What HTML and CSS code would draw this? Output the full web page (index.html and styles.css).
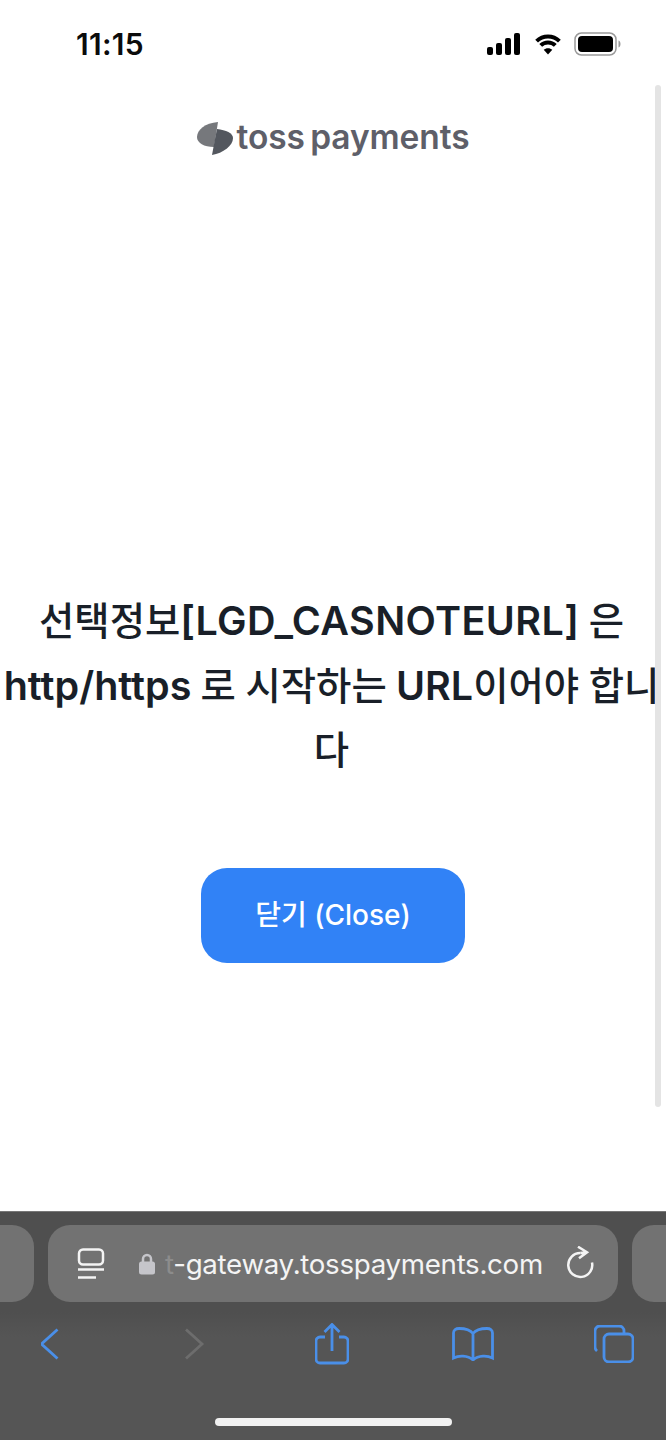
FILE: index.html
```html
<!DOCTYPE html>
<html lang="ko">
<head>
<meta charset="utf-8">
<title>toss payments</title>
<link rel="stylesheet" href="styles.css">
</head>
<body>
<div class="phone">
  <header class="status">
    <span class="time">11:15</span>
    <div class="status-icons">
      <svg width="35" height="22" viewBox="0 0 35 22"><rect x="0" y="14" width="6" height="8" rx="2"/><rect x="9" y="10" width="6" height="12" rx="2"/><rect x="18" y="5" width="6" height="17" rx="2"/><rect x="27" y="0" width="6" height="22" rx="2"/></svg>
      <svg width="30" height="22" viewBox="0 0 30 22"><path d="M15 3.5c4.4 0 8.400 1.700 11.400 4.600" class="wifi"/><path d="M3.600 8.100C6.600 5.200 10.600 3.500 15 3.500" class="wifi"/><path d="M7.700 12.400c1.900-1.900 4.500-3 7.300-3s5.400 1.100 7.300 3" class="wifi"/><path d="M15 21.500l-4.300-4.700c1.100-1 2.600-1.600 4.300-1.600s3.200.6 4.300 1.600z"/></svg>
      <svg width="47" height="24" viewBox="0 0 47 24"><rect x="1" y="1" width="41" height="22" rx="6.500" class="batt-frame"/><rect x="4" y="4" width="35" height="16" rx="4"/><path d="M44.500 8.500c1.300.4 2 1.800 2 3.500s-.7 3.100-2 3.500z" class="batt-cap"/></svg>
    </div>
  </header>

  <main class="page">
    <div class="logo">
      <svg class="logo-mark" width="36" height="33" viewBox="0 0 36 33"><path d="M21 0C8 1 0 8 0 15c0 6 7 10 17 10z" fill="#76787c"/><path d="M20 7c9 1 16 4 16 9 0 8-10 15-21 17l3-16z" fill="#53575e"/></svg>
      <span class="logo-text">toss payments</span>
    </div>
    <div class="message">
      <h1 class="title"><span class="ko">선택정보</span><span class="code">[LGD_CASNOTEURL]</span> <span class="ko">은</span> http/https <span class="ko">로 시작하는</span> URL<span class="ko">이어야 합니</span><span class="ko">다</span></h1>
      <button class="close" type="button">닫기 (Close)</button>
    </div>
  </main>
  <div class="scrollbar"></div>

  <footer class="safari">
    <div class="tabs">
      <div class="tab-side tab-left"></div>
      <div class="address">
        <svg class="reader" width="28" height="32" viewBox="0 0 28 32"><rect x="2" y="1.500" width="24" height="15" rx="4"/><path d="M1 21.500h26M1 29.500h18"/></svg>
        <svg class="lock" width="16" height="22" viewBox="0 0 16 22"><path d="M4 9V6a4 4 0 0 1 8 0v3" class="shackle"/><rect x="0" y="8.500" width="16" height="13" rx="2.500"/></svg>
        <span class="url"><span class="url-fade">t</span>-gateway.tosspayments.com</span>
        <svg class="reload" width="30" height="36" viewBox="0 0 30 36"><path d="M14.300 7A12 12 0 1 0 26 16.500"/><path d="M14.300 7L21 6.300M12 .7l9 5.600-8 6"/></svg>
      </div>
      <div class="tab-side tab-right"></div>
    </div>
    <nav class="tools">
      <svg class="tool" width="20" height="32" viewBox="1.500 0 20 32"><path d="M18 1.500L2 16l16 14.500"/></svg>
      <svg class="tool tool-off" width="26" height="32" viewBox="0 0 26 32"><path d="M7 1.500L23 16 7 30.500"/></svg>
      <svg class="tool" width="34" height="42" viewBox="0 0 34 42"><path d="M10 14H5a4 4 0 0 0-4 4v18a4 4 0 0 0 4 4h24a4 4 0 0 0 4-4V18a4 4 0 0 0-4-4h-5"/><path d="M17 28V2M9.500 9L17 1.500 24.500 9"/></svg>
      <svg class="tool" width="42" height="34" viewBox="0 0 42 34"><path d="M21 6.500C18 2.500 13 1.500 7 1.500c-3 0-5.500 1.500-5.500 4.500v25c5-2.500 14-3 19.500 2 5.500-5 14.500-4.500 19.500-2V6c0-3-2.500-4.500-5.500-4.500-6 0-11 1-14 5zM21 6.500V33"/></svg>
      <svg class="tool" width="40" height="38" viewBox="0 0 40 38"><path d="M3 26c-1-.8-2-2-2-4V6a5 5 0 0 1 5-5h19a5 5 0 0 1 5 5v3"/><rect x="10" y="9" width="29" height="28" rx="5"/></svg>
    </nav>
    <div class="home"></div>
  </footer>
</div>
</body>
</html>
```
FILE: styles.css
```css
* { box-sizing: border-box; }
html, body { margin: 0; padding: 0; }
body { background: #fff; font-family: "Inter", "Noto Sans CJK KR", sans-serif; }

.phone {
  position: relative;
  width: 666px;
  height: 1440px;
  display: flex;
  flex-direction: column;
  overflow: hidden;
}

.status {
  height: 88px;
  flex: none;
  display: flex;
  justify-content: space-between;
  align-items: flex-start;
  padding: 27px 45px 0 76px;
}
.time {
  font-family: "Inter", sans-serif;
  font-size: 30px;
  line-height: 35px;
  font-weight: 600;
  color: #0b0b0b;
  letter-spacing: 0.3px;
}
.status-icons { display: flex; align-items: center; gap: 11px; padding-top: 5px; }
.status-icons svg { display: block; fill: #000; }
.wifi { fill: none; stroke: #000; stroke-width: 4; }
.batt-frame { fill: none; stroke: #9a9a9a; stroke-width: 1.500; }
.batt-cap { fill: #9a9a9a; }

.page {
  flex: 1;
  min-height: 0;
  display: flex;
  flex-direction: column;
  align-items: center;
}
.logo {
  display: flex;
  align-items: center;
  gap: 4px;
  height: 34px;
  margin-top: 33px;
}
.logo-mark { display: block; }
.logo-text {
  font-family: "Inter", sans-serif;
  font-size: 33.500px;
  line-height: 32px;
  font-weight: 600;
  color: #5e5f69;
  letter-spacing: -0.1px;
  word-spacing: -3px;
  margin-bottom: 2px;
}
.message {
  width: 100%;
  padding-top: 434px;
  display: flex;
  flex-direction: column;
  align-items: center;
}
.title {
  margin: 0;
  width: 100%;
  padding: 0 3px 0 0;
  font-size: 39.500px;
  line-height: 64.500px;
  font-weight: 600;
  text-align: center;
  color: #191f28;
  word-spacing: -0.7px;
}
.ko {
  font-size: 38.400px;
  font-weight: 500;
}
.code { letter-spacing: 0.4px; }
.close {
  width: 264px;
  height: 95px;
  margin-top: 85px;
  padding: 0 0 5px;
  border: 0;
  border-radius: 26px;
  background: #3182f6;
  color: #fff;
  font-family: "Inter", "Noto Sans CJK KR", sans-serif;
  font-size: 28px;
  font-weight: 500;
}

.scrollbar {
  position: absolute;
  left: 655px;
  top: 85px;
  width: 6px;
  height: 1022px;
  border-radius: 3px;
  background: #e4e4e4;
}

.safari {
  height: 229px;
  flex: none;
  position: relative;
  background: linear-gradient(#4f4f4f, #4f4f4f 100px, #555555 125px);
  border-top: 1px solid #777;
  padding-top: 13px;
}
.tabs {
  display: flex;
  gap: 14px;
  height: 77px;
  margin-left: -20px;
  width: 706px;
}
.tab-side, .address { background: #727272; border-radius: 22px; height: 77px; }
.tab-side { flex: 1; }
.address {
  flex: none;
  width: 570px;
  display: flex;
  align-items: center;
  padding: 0 22px 0 29px;
  color: #fff;
}
.reader, .reload { flex: none; fill: none; stroke: #f4f4f4; stroke-width: 2.500; }
.lock { flex: none; margin-left: 34px; fill: #c5c5ca; }
.shackle { fill: none; stroke: #c5c5ca; stroke-width: 2.500; }
.url {
  flex: 1;
  margin-left: 10px;
  font-family: "Inter", sans-serif;
  font-size: 27.700px;
  line-height: 34px;
  white-space: nowrap;
  color: #f4f4f4;
  letter-spacing: -0.3px;
}
.url-fade { color: #8c8c8c; }

.tools {
  display: grid;
  grid-template-columns: repeat(5, 140.800px);
  justify-items: center;
  align-items: center;
  height: 42px;
  width: 704px;
  margin: 21px 0 0 -19.500px;
}
.tool { display: block; fill: none; stroke: #4a8fe8; stroke-width: 2.800; }
.tool-off { stroke: #6d6d6d; }

.home {
  position: absolute;
  left: 215px;
  top: 206px;
  width: 237px;
  height: 8px;
  border-radius: 4px;
  background: #f1f1f1;
}
```
